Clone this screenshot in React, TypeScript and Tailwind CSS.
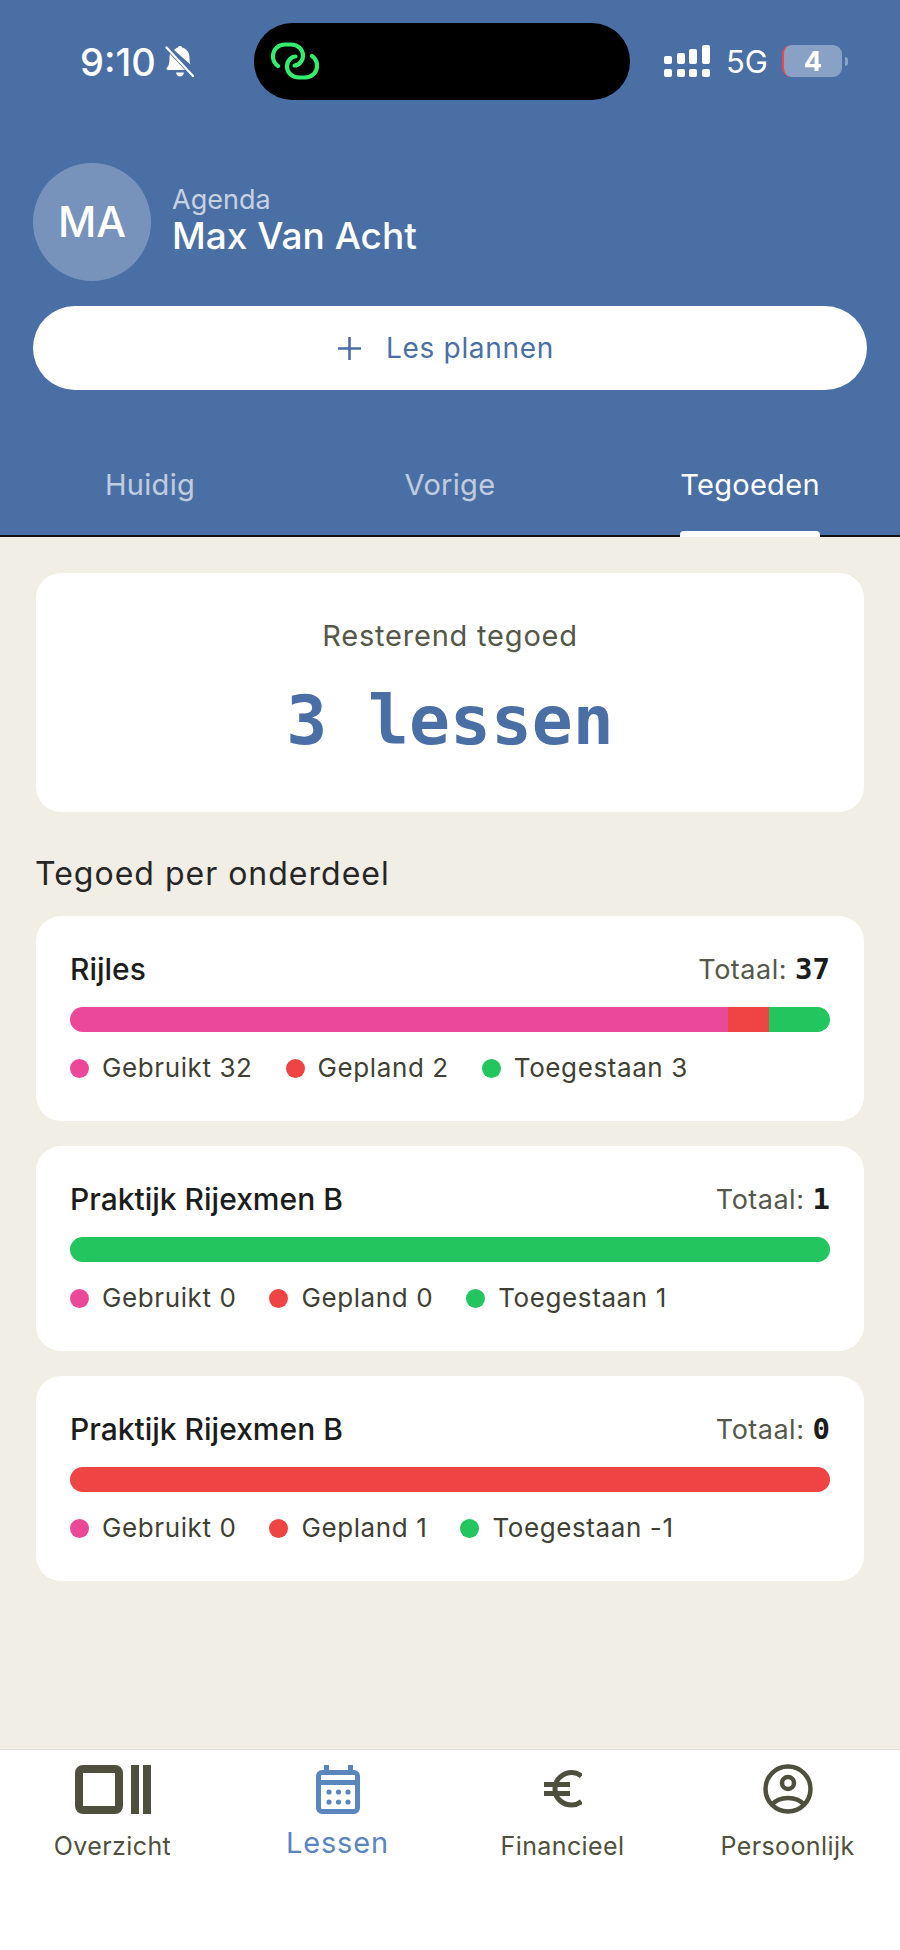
import React from "react";

const Bell = () => (
  <svg width="30" height="32" viewBox="0 0 30 32" className="ml-[9px]">
    <path d="M5 8 L20 24 H3 C1.5 24 1 22.5 2 21.5 C4.5 19 4.5 15 4.5 11.5 C4.5 10.3 4.7 9 5 8 Z M9 4 C10.5 2.5 12 1.8 13 1.6 C13.3 0.3 14 0 15 0 C16 0 16.7 0.3 17 1.6 C22 2.8 24.5 7 24.5 11.5 C24.5 14 24.6 16.5 25.5 18.5 Z M11 26.5 H19 C18.6 29 17 30.5 15 30.5 C13 30.5 11.4 29 11 26.5 Z" fill="#fff" />
    <path d="M1.5 1.5 L28 30" stroke="#fff" strokeWidth="2.2" strokeLinecap="round" />
  </svg>
);

const LinkLogo = () => (
  <svg width="48" height="38" viewBox="0 0 48 38" fill="none" stroke="#33ee6c" strokeWidth="4.2" strokeLinecap="round">
    <path d="M7 24 C3.5 21.5 2 18.5 2 14.5 C2 7 7.5 2.5 14 2.5 H20 C27 2.5 32 7.5 32 13.5 C32 19.5 27.5 23.5 23.5 23.5" />
    <path d="M41 14 C44.5 16.5 46 19.5 46 23.5 C46 31 40.5 35.5 34 35.5 H28 C21 35.5 16 30.5 16 24.5 C16 18.5 20.5 14.5 24.5 14.5" />
  </svg>
);

const Signal = () => (
  <div className="flex flex-col gap-[5px] w-[46px]">
    <div className="flex items-end justify-between h-[19px]">
      <div className="w-[8px] h-[8px] rounded-[2px] bg-white" />
      <div className="w-[8px] h-[11px] rounded-[2px] bg-white" />
      <div className="w-[8px] h-[15px] rounded-[2px] bg-white" />
      <div className="w-[8px] h-[19px] rounded-[2px] bg-white" />
    </div>
    <div className="flex justify-between">
      <div className="w-[8px] h-[8px] rounded-[2px] bg-white" />
      <div className="w-[8px] h-[8px] rounded-[2px] bg-white" />
      <div className="w-[8px] h-[8px] rounded-[2px] bg-white" />
      <div className="w-[8px] h-[8px] rounded-[2px] bg-white" />
    </div>
  </div>
);

const StatusBar = () => (
  <div className="h-[100px] pt-[23px] pl-[80px] flex items-start">
    <div className="w-[174px] h-[77px] flex items-center">
      <span className="text-[38px] leading-none font-medium text-white">9:10</span>
      <Bell />
    </div>
    <div className="w-[376px] h-[77px] bg-black rounded-[38px] flex items-center pl-[17px] pb-[1px]">
      <LinkLogo />
    </div>
    <div className="h-[77px] flex items-center pl-[34px] pb-[1px]">
      <Signal />
      <span className="ml-[16px] text-[31px] leading-none text-white font-normal">5G</span>
      <div className="ml-[14px] w-[60px] h-[32px] rounded-[9px] bg-white/35 border-l-2 border-l-[#ef4444] flex items-center justify-center">
        <span className="text-[27px] leading-none font-bold text-white">4</span>
      </div>
      <div className="ml-[3px] w-[3px] h-[9px] rounded-r-[3px] bg-white/35" />
    </div>
  </div>
);

type Seg = { color: string; flex: number };
type CardData = {
  title: string;
  total: string;
  segs: Seg[];
  legend: [string, string, string];
};

const PINK = "#ec4899";
const RED = "#ef4444";
const GREEN = "#22c55e";

const cards: CardData[] = [
  {
    title: "Rijles",
    total: "37",
    segs: [
      { color: PINK, flex: 658 },
      { color: RED, flex: 41 },
      { color: GREEN, flex: 61 },
    ],
    legend: ["Gebruikt 32", "Gepland 2", "Toegestaan 3"],
  },
  {
    title: "Praktijk Rijexmen B",
    total: "1",
    segs: [{ color: GREEN, flex: 1 }],
    legend: ["Gebruikt 0", "Gepland 0", "Toegestaan 1"],
  },
  {
    title: "Praktijk Rijexmen B",
    total: "0",
    segs: [{ color: RED, flex: 1 }],
    legend: ["Gebruikt 0", "Gepland 1", "Toegestaan -1"],
  },
];

const Legend = ({ color, label }: { color: string; label: string }) => (
  <div className="flex items-center gap-[13px]">
    <span className="w-[19px] h-[19px] rounded-full" style={{ backgroundColor: color }} />
    <span className="text-[26px] leading-none text-[#3f3f36] tracking-[0.6px]">{label}</span>
  </div>
);

const Card = ({ d }: { d: CardData }) => (
  <div className="h-[205px] bg-white rounded-[25px] px-[34px] pt-[37px]">
    <div className="flex items-center justify-between h-[32px]">
      <span className="text-[30px] leading-none font-medium text-[#1c1c1c]">{d.title}</span>
      <span className="text-[27px] leading-none text-[#55574a] tracking-[0.5px]">
        Totaal: <span className="font-bold text-[#1c1c1c] text-[29px] font-['DejaVu_Sans_Mono'] tracking-normal">{d.total}</span>
      </span>
    </div>
    <div className="mt-[22px] h-[25px] rounded-full overflow-hidden flex">
      {d.segs.map((s, i) => (
        <div key={i} style={{ backgroundColor: s.color, flexGrow: s.flex }} />
      ))}
    </div>
    <div className="mt-[23px] flex gap-x-[33px]">
      <Legend color={PINK} label={d.legend[0]} />
      <Legend color={RED} label={d.legend[1]} />
      <Legend color={GREEN} label={d.legend[2]} />
    </div>
  </div>
);

const DARK = "#4f4f3e";
const BLUE = "#5b85bd";

const NavItem = ({ icon, label, active }: { icon: React.ReactNode; label: string; active?: boolean }) => (
  <div className="flex flex-col items-center">
    <div className="h-[50px] flex items-center justify-center">{icon}</div>
    {active ? (
      <span className="mt-[13px] text-[29px] leading-[32px] tracking-[0.8px] text-[#5b85bd]">{label}</span>
    ) : (
      <span className="mt-[16px] text-[25px] leading-[32px] tracking-[0.4px] text-[#4f4f3e]">{label}</span>
    )}
  </div>
);

export default function App() {
  return (
    <div className="w-[900px] h-[1950px] bg-[#f1eee6] flex flex-col overflow-hidden font-['Inter',sans-serif]">
      <header className="h-[537px] shrink-0 bg-[#4a6fa5] border-b-2 border-b-[#111111] flex flex-col">
        <StatusBar />
        <div className="flex items-center gap-[21px] pl-[33px] mt-[63px]">
          <div className="w-[118px] h-[118px] rounded-full bg-white/25 flex items-center justify-center text-[42px] leading-none font-medium text-white">MA</div>
          <div className="flex flex-col pb-[3px]">
            <span className="text-[27px] leading-[30px] text-white/70">Agenda</span>
            <span className="text-[37px] leading-[42px] font-medium text-white">Max Van Acht</span>
          </div>
        </div>
        <div className="mx-[33px] mt-[25px] h-[84px] rounded-full bg-white flex items-center justify-center gap-[25px] text-[#4a6fa5] pr-[8px]">
          <svg width="23" height="23" viewBox="0 0 23 23" fill="none" stroke="#4a6fa5" strokeWidth="2.6">
            <path d="M11.5 0 V23 M0 11.5 H23" />
          </svg>
          <span className="text-[28px] leading-none tracking-[0.7px]">Les plannen</span>
        </div>
        <div className="grid grid-cols-3 mt-[75px] flex-1 -mb-[2px]">
          <div className="flex justify-center pt-[3px]"><span className="text-[29px] leading-[34px] text-white/65 tracking-[0.3px]">Huidig</span></div>
          <div className="flex justify-center pt-[3px]"><span className="text-[29px] leading-[34px] text-white/65 tracking-[0.3px]">Vorige</span></div>
          <div className="flex justify-center pt-[3px]">
            <div className="flex flex-col h-full">
              <span className="text-[29px] leading-[34px] text-white tracking-[0.3px]">Tegoeden</span>
              <div className="mt-auto h-[6px] rounded-t-[4px] bg-white" />
            </div>
          </div>
        </div>
      </header>

      <main className="flex-1 px-[36px] pt-[36px]">
        <div className="h-[239px] bg-white rounded-[25px] flex flex-col items-center pt-[46px]">
          <span className="text-[29px] leading-[34px] tracking-[0.8px] text-[#55574a]">Resterend tegoed</span>
          <span className="mt-[28px] text-[68px] leading-[80px] font-bold text-[#4a6fa5] font-['DejaVu_Sans_Mono',monospace]">3 lessen</span>
        </div>
        <h2 className="mt-[44px] text-[32px] leading-[36px] font-normal tracking-[1px] text-[#262626] -ml-[1px]">Tegoed per onderdeel</h2>
        <div className="mt-[24px] flex flex-col gap-[25px]">
          {cards.map((c, i) => <Card key={i} d={c} />)}
        </div>
      </main>

      <nav className="h-[201px] shrink-0 bg-white border-t border-t-[#e6e3da] grid grid-cols-4 pt-[14px]">
        <NavItem
          label="Overzicht"
          icon={
            <svg width="76" height="49" viewBox="0 0 76 49" fill="none" stroke={DARK} strokeWidth="8">
              <rect x="4" y="4" width="40" height="41" rx="4" />
              <path d="M60 0 V49 M72 0 V49" />
            </svg>
          }
        />
        <NavItem
          active
          label="Lessen"
          icon={
            <svg width="44" height="49" viewBox="0 0 44 49" fill="none">
              <path d="M10.5 0 V8 M34.5 0 V8" stroke={BLUE} strokeWidth="5" />
              <rect x="2.5" y="7.5" width="39" height="39" rx="3.5" stroke={BLUE} strokeWidth="5" />
              <path d="M2 17.5 H42" stroke={BLUE} strokeWidth="5" />
              <g fill={BLUE}>
                <circle cx="13" cy="27" r="2.6" /><circle cx="22.5" cy="27" r="2.6" /><circle cx="32" cy="27" r="2.6" />
                <circle cx="13" cy="37" r="2.6" /><circle cx="22.5" cy="37" r="2.6" /><circle cx="32" cy="37" r="2.6" />
              </g>
            </svg>
          }
        />
        <NavItem
          label="Financieel"
          icon={
            <svg width="38" height="38" viewBox="0 0 38 38" fill="none" stroke={DARK} strokeWidth="5">
              <path d="M37.5 6 C34.5 3.6 31.5 2.5 28 2.5 C19 2.5 11 9 11 19 C11 29 19 35 28 35 C31.5 35 34.5 33.8 37.5 31.5" />
              <path d="M0 14.5 H26 M0 23.5 H26" />
            </svg>
          }
        />
        <NavItem
          label="Persoonlijk"
          icon={
            <svg width="50" height="50" viewBox="0 0 50 50" fill="none" stroke={DARK} strokeWidth="4.5">
              <circle cx="25" cy="25" r="22.5" />
              <circle cx="25" cy="19" r="6" />
              <path d="M8.5 41 C13 35.5 19 34 25 34 C31 34 37 35.5 41.5 41" />
            </svg>
          }
        />
      </nav>
    </div>
  );
}
